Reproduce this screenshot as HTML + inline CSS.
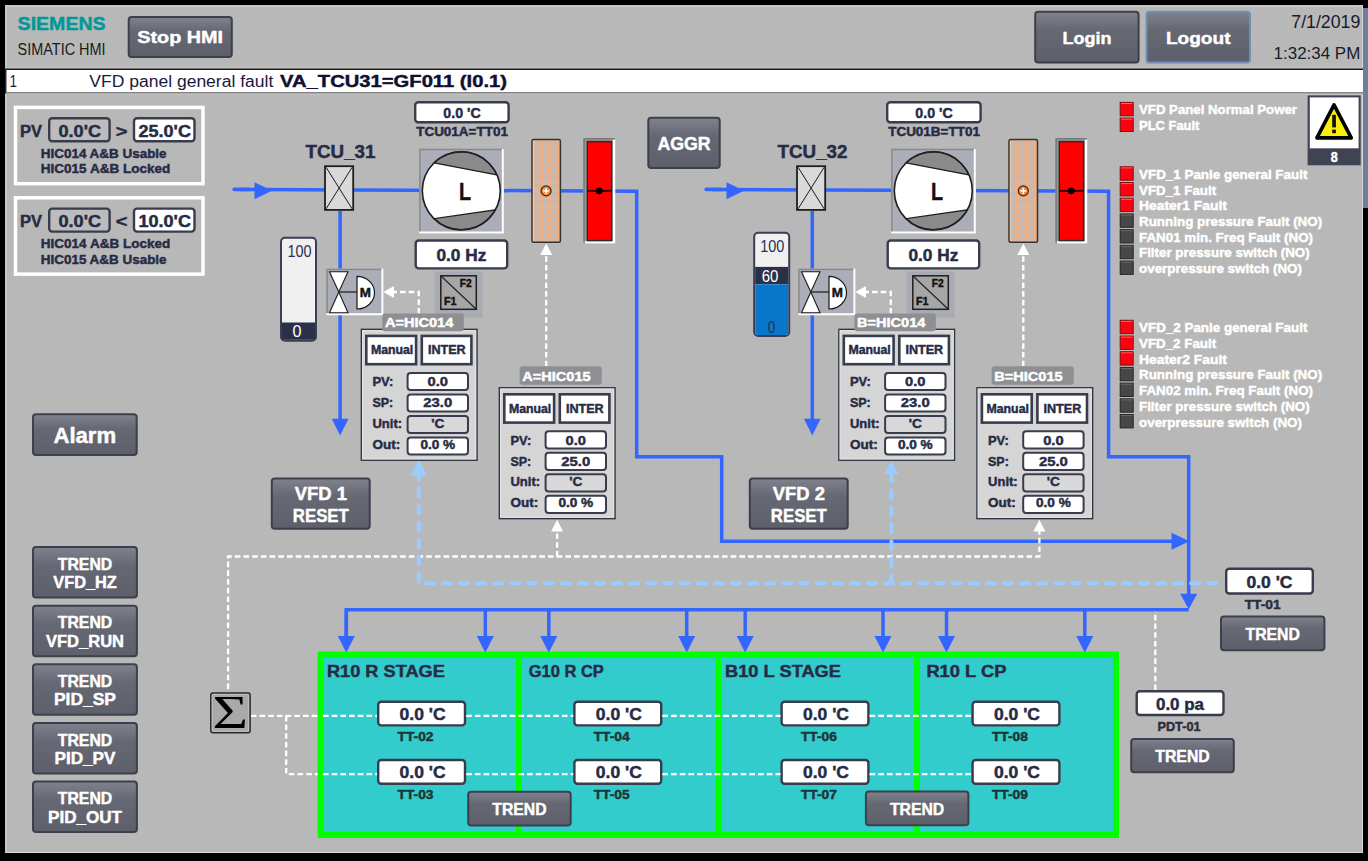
<!DOCTYPE html><html><head><meta charset="utf-8"><style>html,body{margin:0;padding:0;background:#000;overflow:hidden}svg{display:block}text{white-space:pre}</style></head><body>
<svg width="1368" height="861" viewBox="0 0 1368 861">
<defs>
<linearGradient id="btn" x1="0" y1="0" x2="0" y2="1">
<stop offset="0" stop-color="#80828d"/><stop offset="0.35" stop-color="#666874"/><stop offset="1" stop-color="#5d5f6b"/>
</linearGradient>
<pattern id="heat" x="534.8" y="142.2" width="8.55" height="8.3" patternUnits="userSpaceOnUse">
<rect width="8.55" height="8.3" fill="#dbb59c"/>
<rect x="0" y="0" width="3.7" height="4.3" fill="#b9bcc3"/>
<rect x="4.3" y="0" width="3.9" height="4.3" fill="#f8ab76"/>
</pattern>
<pattern id="heat2" x="1011.8" y="142.2" width="8.55" height="8.3" patternUnits="userSpaceOnUse">
<rect width="8.55" height="8.3" fill="#dbb59c"/>
<rect x="0" y="0" width="3.7" height="4.3" fill="#b9bcc3"/>
<rect x="4.3" y="0" width="3.9" height="4.3" fill="#f8ab76"/>
</pattern>
</defs>
<rect x="0.0" y="0.0" width="1368.0" height="861.0" rx="0" fill="#000" stroke="none" stroke-width="1"/>
<rect x="5.0" y="5.0" width="1358.0" height="848.0" rx="0" fill="#b8b8b8" stroke="none" stroke-width="1"/>
<path d="M5 852.5 H1362.5 V5" fill="none" stroke="#d8d8d8" stroke-width="1"/>
<rect x="5.5" y="5.5" width="1357.5" height="1.5" rx="0" fill="#cbcbcb" stroke="none" stroke-width="1"/>
<rect x="5.5" y="5.5" width="1.5" height="847.5" rx="0" fill="#cbcbcb" stroke="none" stroke-width="1"/>
<rect x="1363.0" y="8.0" width="5.0" height="200.0" rx="0" fill="#6d8095" stroke="none" stroke-width="1"/>
<text x="17.6" y="29.9" font-size="18.5" font-weight="bold" fill="#009999" text-anchor="start" font-family="Liberation Sans, sans-serif" textLength="88.0" lengthAdjust="spacingAndGlyphs" stroke="#009999" stroke-width="0.45" stroke-linejoin="round">SIEMENS</text>
<text x="17.6" y="55.1" font-size="16" font-weight="normal" fill="#1a1a1a" text-anchor="start" font-family="Liberation Sans, sans-serif" textLength="88.0" lengthAdjust="spacingAndGlyphs">SIMATIC HMI</text>
<rect x="128.7" y="17.0" width="103.1" height="40.0" rx="3" fill="url(#btn)" stroke="#3c3f4c" stroke-width="2"/>
<text x="180.2" y="43.3" font-size="17" font-weight="bold" fill="#ffffff" text-anchor="middle" font-family="Liberation Sans, sans-serif" textLength="85.7" lengthAdjust="spacingAndGlyphs" stroke="#ffffff" stroke-width="0.45" stroke-linejoin="round">Stop HMI</text>
<rect x="1035.2" y="11.8" width="103.4" height="50.7" rx="3" fill="url(#btn)" stroke="#3c3f4c" stroke-width="2"/>
<text x="1086.9" y="43.6" font-size="17.3" font-weight="bold" fill="#ffffff" text-anchor="middle" font-family="Liberation Sans, sans-serif" textLength="49.0" lengthAdjust="spacingAndGlyphs" stroke="#ffffff" stroke-width="0.45" stroke-linejoin="round">Login</text>
<rect x="1146.5" y="11.8" width="103.5" height="50.7" rx="3" fill="url(#btn)" stroke="#6f8fb8" stroke-width="2"/>
<text x="1198.2" y="43.6" font-size="17.3" font-weight="bold" fill="#ffffff" text-anchor="middle" font-family="Liberation Sans, sans-serif" textLength="64.6" lengthAdjust="spacingAndGlyphs" stroke="#ffffff" stroke-width="0.45" stroke-linejoin="round">Logout</text>
<text x="1360.3" y="27.6" font-size="17.5" font-weight="normal" fill="#1a1a2a" text-anchor="end" font-family="Liberation Sans, sans-serif" textLength="69.0" lengthAdjust="spacingAndGlyphs">7/1/2019</text>
<text x="1360.3" y="59.2" font-size="17" font-weight="normal" fill="#1a1a2a" text-anchor="end" font-family="Liberation Sans, sans-serif" textLength="86.7" lengthAdjust="spacingAndGlyphs">1:32:34 PM</text>
<rect x="6.0" y="67.0" width="1357.0" height="1.5" rx="0" fill="#c4c4c4" stroke="none" stroke-width="1"/>
<rect x="6.0" y="68.5" width="1357.0" height="1.5" rx="0" fill="#1e1e1e" stroke="none" stroke-width="1"/>
<rect x="6.0" y="70.0" width="1357.0" height="22.0" rx="0" fill="#ffffff" stroke="none" stroke-width="1"/>
<rect x="5.0" y="68.5" width="1.5" height="25.1" rx="0" fill="#2a2a2a" stroke="none" stroke-width="1"/>
<rect x="6.0" y="92.0" width="1357.0" height="1.6" rx="0" fill="#858585" stroke="none" stroke-width="1"/>
<rect x="6.0" y="93.6" width="1357.0" height="1.4" rx="0" fill="#c2c2c2" stroke="none" stroke-width="1"/>
<text x="9.5" y="87.2" font-size="17.3" font-weight="normal" fill="#1a1a40" text-anchor="start" font-family="Liberation Sans, sans-serif" textLength="7.5" lengthAdjust="spacingAndGlyphs">1</text>
<text x="89.3" y="87.2" font-size="17.3" font-weight="normal" fill="#1a1a40" text-anchor="start" font-family="Liberation Sans, sans-serif" textLength="184.0" lengthAdjust="spacingAndGlyphs">VFD panel general fault</text>
<text x="280.0" y="87.2" font-size="17.3" font-weight="bold" fill="#101030" text-anchor="start" font-family="Liberation Sans, sans-serif" textLength="227.0" lengthAdjust="spacingAndGlyphs" stroke="#101030" stroke-width="0.45" stroke-linejoin="round">VA_TCU31=GF011 (I0.1)</text>
<rect x="15.5" y="107.4" width="187.5" height="76.3" rx="0" fill="#b8b8b8" stroke="#ffffff" stroke-width="3.5"/>
<text x="20.0" y="136.5" font-size="16" font-weight="bold" fill="#272b45" text-anchor="start" font-family="Liberation Sans, sans-serif" textLength="22.0" lengthAdjust="spacingAndGlyphs" stroke="#272b45" stroke-width="0.45" stroke-linejoin="round">PV</text>
<rect x="49.2" y="118.2" width="60.4" height="23.0" rx="3" fill="#bcbcbc" stroke="#393c4c" stroke-width="2.4"/>
<text x="58.5" y="136.5" font-size="16" font-weight="bold" fill="#272b45" text-anchor="start" font-family="Liberation Sans, sans-serif" textLength="42.5" lengthAdjust="spacingAndGlyphs" stroke="#272b45" stroke-width="0.45" stroke-linejoin="round">0.0'C</text>
<text x="115.8" y="136.5" font-size="16" font-weight="bold" fill="#272b45" text-anchor="start" font-family="Liberation Sans, sans-serif" textLength="11.7" lengthAdjust="spacingAndGlyphs" stroke="#272b45" stroke-width="0.45" stroke-linejoin="round">&gt;</text>
<rect x="134.0" y="118.2" width="60.5" height="23.0" rx="3" fill="#fff" stroke="#393c4c" stroke-width="2.4"/>
<text x="138.6" y="136.5" font-size="16" font-weight="bold" fill="#272b45" text-anchor="start" font-family="Liberation Sans, sans-serif" textLength="52.3" lengthAdjust="spacingAndGlyphs" stroke="#272b45" stroke-width="0.45" stroke-linejoin="round">25.0'C</text>
<text x="40.8" y="157.9" font-size="12.7" font-weight="bold" fill="#272b45" text-anchor="start" font-family="Liberation Sans, sans-serif" textLength="125.8" lengthAdjust="spacingAndGlyphs" stroke="#272b45" stroke-width="0.45" stroke-linejoin="round">HIC014 A&amp;B Usable</text>
<text x="40.8" y="173.3" font-size="12.7" font-weight="bold" fill="#272b45" text-anchor="start" font-family="Liberation Sans, sans-serif" textLength="129.5" lengthAdjust="spacingAndGlyphs" stroke="#272b45" stroke-width="0.45" stroke-linejoin="round">HIC015 A&amp;B Locked</text>
<rect x="15.5" y="197.8" width="187.5" height="76.3" rx="0" fill="#b8b8b8" stroke="#ffffff" stroke-width="3.5"/>
<text x="20.0" y="226.9" font-size="16" font-weight="bold" fill="#272b45" text-anchor="start" font-family="Liberation Sans, sans-serif" textLength="22.0" lengthAdjust="spacingAndGlyphs" stroke="#272b45" stroke-width="0.45" stroke-linejoin="round">PV</text>
<rect x="49.2" y="208.6" width="60.4" height="23.0" rx="3" fill="#bcbcbc" stroke="#393c4c" stroke-width="2.4"/>
<text x="58.5" y="226.9" font-size="16" font-weight="bold" fill="#272b45" text-anchor="start" font-family="Liberation Sans, sans-serif" textLength="42.5" lengthAdjust="spacingAndGlyphs" stroke="#272b45" stroke-width="0.45" stroke-linejoin="round">0.0'C</text>
<text x="115.8" y="226.9" font-size="16" font-weight="bold" fill="#272b45" text-anchor="start" font-family="Liberation Sans, sans-serif" textLength="11.7" lengthAdjust="spacingAndGlyphs" stroke="#272b45" stroke-width="0.45" stroke-linejoin="round">&lt;</text>
<rect x="134.0" y="208.6" width="60.5" height="23.0" rx="3" fill="#fff" stroke="#393c4c" stroke-width="2.4"/>
<text x="138.6" y="226.9" font-size="16" font-weight="bold" fill="#272b45" text-anchor="start" font-family="Liberation Sans, sans-serif" textLength="52.3" lengthAdjust="spacingAndGlyphs" stroke="#272b45" stroke-width="0.45" stroke-linejoin="round">10.0'C</text>
<text x="40.8" y="248.3" font-size="12.7" font-weight="bold" fill="#272b45" text-anchor="start" font-family="Liberation Sans, sans-serif" textLength="129.5" lengthAdjust="spacingAndGlyphs" stroke="#272b45" stroke-width="0.45" stroke-linejoin="round">HIC014 A&amp;B Locked</text>
<text x="40.8" y="263.7" font-size="12.7" font-weight="bold" fill="#272b45" text-anchor="start" font-family="Liberation Sans, sans-serif" textLength="125.8" lengthAdjust="spacingAndGlyphs" stroke="#272b45" stroke-width="0.45" stroke-linejoin="round">HIC015 A&amp;B Usable</text>
<path d="M240.0 189.4 L636.7 191.2 L636.7 456.7 L721.7 456.7 L721.7 541.2 L1173.0 541.2" fill="none" stroke="#3366ff" stroke-width="3.5" stroke-linecap="butt" stroke-linejoin="miter"/>
<path d="M234.2 189.4 L250.0 189.5" fill="none" stroke="#3366ff" stroke-width="3.6" stroke-linecap="round" stroke-linejoin="miter"/>
<path d="M254.5 182.2 L254.5 199.2 L272.0 190.7 Z" fill="#3366ff" stroke="none" stroke-width="1"/>
<path d="M340.1 211.0 L340.1 420.0" fill="none" stroke="#3366ff" stroke-width="3.5" stroke-linecap="butt" stroke-linejoin="miter"/>
<path d="M331.8 418.7 L348.5 418.7 L340.1 435.4 Z" fill="#3366ff" stroke="none" stroke-width="1"/>
<path d="M1171.5 532.7 L1171.5 549.7 L1189.5 541.2 Z" fill="#3366ff" stroke="none" stroke-width="1"/>
<path d="M712.0 189.4 L1108.6 191.2 L1108.6 456.8 L1188.7 456.8 L1188.7 595.0" fill="none" stroke="#3366ff" stroke-width="3.5" stroke-linecap="butt" stroke-linejoin="miter"/>
<path d="M706.2 189.4 L722.0 189.5" fill="none" stroke="#3366ff" stroke-width="3.6" stroke-linecap="round" stroke-linejoin="miter"/>
<path d="M726.5 182.3 L726.5 199.3 L744.0 190.8 Z" fill="#3366ff" stroke="none" stroke-width="1"/>
<path d="M812.3 211.0 L812.3 420.0" fill="none" stroke="#3366ff" stroke-width="3.5" stroke-linecap="butt" stroke-linejoin="miter"/>
<path d="M803.9 418.7 L820.6 418.7 L812.3 435.4 Z" fill="#3366ff" stroke="none" stroke-width="1"/>
<path d="M1180.2 593.7 L1197.2 593.7 L1188.7 609.2 Z" fill="#3366ff" stroke="none" stroke-width="1"/>
<path d="M346.3 636.5 L346.3 609.7 L1188.7 609.7" fill="none" stroke="#3366ff" stroke-width="3.5" stroke-linecap="butt" stroke-linejoin="miter"/>
<path d="M346.3 609.7 L346.3 637.0" fill="none" stroke="#3366ff" stroke-width="3.5" stroke-linecap="butt" stroke-linejoin="miter"/>
<path d="M337.8 636.0 L354.8 636.0 L346.3 652.8 Z" fill="#3366ff" stroke="none" stroke-width="1"/>
<path d="M485.3 609.7 L485.3 637.0" fill="none" stroke="#3366ff" stroke-width="3.5" stroke-linecap="butt" stroke-linejoin="miter"/>
<path d="M476.8 636.0 L493.8 636.0 L485.3 652.8 Z" fill="#3366ff" stroke="none" stroke-width="1"/>
<path d="M548.8 609.7 L548.8 637.0" fill="none" stroke="#3366ff" stroke-width="3.5" stroke-linecap="butt" stroke-linejoin="miter"/>
<path d="M540.3 636.0 L557.3 636.0 L548.8 652.8 Z" fill="#3366ff" stroke="none" stroke-width="1"/>
<path d="M686.7 609.7 L686.7 637.0" fill="none" stroke="#3366ff" stroke-width="3.5" stroke-linecap="butt" stroke-linejoin="miter"/>
<path d="M678.2 636.0 L695.2 636.0 L686.7 652.8 Z" fill="#3366ff" stroke="none" stroke-width="1"/>
<path d="M745.2 609.7 L745.2 637.0" fill="none" stroke="#3366ff" stroke-width="3.5" stroke-linecap="butt" stroke-linejoin="miter"/>
<path d="M736.7 636.0 L753.7 636.0 L745.2 652.8 Z" fill="#3366ff" stroke="none" stroke-width="1"/>
<path d="M883.0 609.7 L883.0 637.0" fill="none" stroke="#3366ff" stroke-width="3.5" stroke-linecap="butt" stroke-linejoin="miter"/>
<path d="M874.5 636.0 L891.5 636.0 L883.0 652.8 Z" fill="#3366ff" stroke="none" stroke-width="1"/>
<path d="M946.5 609.7 L946.5 637.0" fill="none" stroke="#3366ff" stroke-width="3.5" stroke-linecap="butt" stroke-linejoin="miter"/>
<path d="M938.0 636.0 L955.0 636.0 L946.5 652.8 Z" fill="#3366ff" stroke="none" stroke-width="1"/>
<path d="M1084.8 609.7 L1084.8 637.0" fill="none" stroke="#3366ff" stroke-width="3.5" stroke-linecap="butt" stroke-linejoin="miter"/>
<path d="M1076.3 636.0 L1093.3 636.0 L1084.8 652.8 Z" fill="#3366ff" stroke="none" stroke-width="1"/>
<path d="M228.1 689.0 L228.1 556.5 L1039.4 556.5 L1039.4 531.0" fill="none" stroke="#ffffff" stroke-width="2.3" stroke-linecap="butt" stroke-linejoin="miter" stroke-dasharray="5.6 3.1"/>
<path d="M557.1 556.5 L557.1 531.0" fill="none" stroke="#ffffff" stroke-width="2.3" stroke-linecap="butt" stroke-linejoin="miter" stroke-dasharray="5.6 3.1"/>
<path d="M557.1 519.7 L563.1 531.5 L551.1 531.5 Z" fill="#fff" stroke="none" stroke-width="1"/>
<path d="M1039.4 519.7 L1045.4 531.5 L1033.4 531.5 Z" fill="#fff" stroke="none" stroke-width="1"/>
<path d="M1224.0 583.2 L418.8 583.2 L418.8 475.0" fill="none" stroke="#99ccff" stroke-width="4" stroke-linecap="round" stroke-linejoin="miter" stroke-dasharray="8 9" stroke-dashoffset="9"/>
<path d="M891.4 583.2 L891.4 473.5" fill="none" stroke="#99ccff" stroke-width="4" stroke-linecap="round" stroke-linejoin="miter" stroke-dasharray="8 9"/>
<path d="M418.8 459.6 L427.3 475.5 L410.3 475.5 Z" fill="#99ccff" stroke="none" stroke-width="1"/>
<path d="M891.4 461.0 L898.6 474.0 L884.1 474.0 Z" fill="#99ccff" stroke="none" stroke-width="1"/>
<path d="M546.2 366.3 L546.2 254.0" fill="none" stroke="#ffffff" stroke-width="2.3" stroke-linecap="butt" stroke-linejoin="miter" stroke-dasharray="5.6 3.1"/>
<path d="M546.2 243.5 L552.2 255.0 L540.2 255.0 Z" fill="#fff" stroke="none" stroke-width="1"/>
<path d="M1023.3 366.3 L1023.3 254.0" fill="none" stroke="#ffffff" stroke-width="2.3" stroke-linecap="butt" stroke-linejoin="miter" stroke-dasharray="5.6 3.1"/>
<path d="M1023.3 243.5 L1029.3 255.0 L1017.3 255.0 Z" fill="#fff" stroke="none" stroke-width="1"/>
<path d="M418.8 313.6 L418.8 292.0 L393.0 292.0" fill="none" stroke="#ffffff" stroke-width="2.3" stroke-linecap="butt" stroke-linejoin="miter" stroke-dasharray="5.6 3.1"/>
<path d="M383.4 292.0 L394.0 286.0 L394.0 298.0 Z" fill="#fff" stroke="none" stroke-width="1"/>
<path d="M890.8 313.6 L890.8 292.0 L865.0 292.0" fill="none" stroke="#ffffff" stroke-width="2.3" stroke-linecap="butt" stroke-linejoin="miter" stroke-dasharray="5.6 3.1"/>
<path d="M855.4 292.0 L866.0 286.0 L866.0 298.0 Z" fill="#fff" stroke="none" stroke-width="1"/>
<path d="M1155.3 690.0 L1155.3 611.5" fill="none" stroke="#ffffff" stroke-width="2.3" stroke-linecap="butt" stroke-linejoin="miter" stroke-dasharray="5.6 3.1"/>
<path d="M250.8 715.8 L971.0 715.8" fill="none" stroke="#ffffff" stroke-width="2.3" stroke-linecap="butt" stroke-linejoin="miter" stroke-dasharray="5.6 3.1"/>
<path d="M286.2 715.8 L286.2 774.1 L971.0 774.1" fill="none" stroke="#ffffff" stroke-width="2.3" stroke-linecap="butt" stroke-linejoin="miter" stroke-dasharray="5.6 3.1"/>
<text x="305.6" y="158.1" font-size="18.2" font-weight="bold" fill="#272b45" text-anchor="start" font-family="Liberation Sans, sans-serif" textLength="69.9" lengthAdjust="spacingAndGlyphs" stroke="#272b45" stroke-width="0.45" stroke-linejoin="round">TCU_31</text>
<rect x="325.0" y="166.2" width="28.2" height="43.7" rx="0" fill="#d9d9d9" stroke="#1e1e1e" stroke-width="1.8"/>
<path d="M326.1 167.3 L352.1 208.8" fill="none" stroke="#1a1a1a" stroke-width="1" stroke-linecap="butt" stroke-linejoin="miter"/>
<path d="M352.1 167.3 L326.1 208.8" fill="none" stroke="#1a1a1a" stroke-width="1" stroke-linecap="butt" stroke-linejoin="miter"/>
<rect x="415.2" y="102.2" width="93.4" height="20.1" rx="3" fill="#fff" stroke="#393c4c" stroke-width="2.4"/>
<text x="462.0" y="117.8" font-size="14.5" font-weight="bold" fill="#272b45" text-anchor="middle" font-family="Liberation Sans, sans-serif" textLength="37.3" lengthAdjust="spacingAndGlyphs" stroke="#272b45" stroke-width="0.45" stroke-linejoin="round">0.0 'C</text>
<text x="416.2" y="136.4" font-size="12.3" font-weight="bold" fill="#272b45" text-anchor="start" font-family="Liberation Sans, sans-serif" textLength="91.7" lengthAdjust="spacingAndGlyphs" stroke="#272b45" stroke-width="0.45" stroke-linejoin="round">TCU01A=TT01</text>
<rect x="419.1" y="148.7" width="84.7" height="84.8" rx="0" fill="#abadb8" stroke="none" stroke-width="1"/>
<path d="M419.9 233.5 L419.9 149.4 L503.8 149.4" fill="none" stroke="#8a8a8a" stroke-width="1.5" stroke-linecap="butt" stroke-linejoin="miter"/>
<path d="M419.1 232.5 L502.8 232.5 L502.8 148.7" fill="none" stroke="#ffffff" stroke-width="2" stroke-linecap="butt" stroke-linejoin="miter"/>
<circle cx="461.3" cy="190.8" r="39" fill="#ffffff"/>
<path d="M434.0 162.9 A39 39 0 0 1 496.9 174.9 Z" fill="#8a8a8a" stroke="#1f1f1f" stroke-width="1.3"/>
<path d="M495.4 209.8 A39 39 0 0 1 434.1 218.7 Z" fill="#8a8a8a" stroke="#1f1f1f" stroke-width="1.3"/>
<circle cx="461.3" cy="190.8" r="39" fill="none" stroke="#1f1f1f" stroke-width="1.6"/>
<text x="464.9" y="199.5" font-size="23.5" font-weight="bold" fill="#111" text-anchor="middle" font-family="Liberation Sans, sans-serif" textLength="12.0" lengthAdjust="spacingAndGlyphs" stroke="#111" stroke-width="0.45" stroke-linejoin="round">L</text>
<rect x="415.7" y="240.5" width="91.5" height="27.9" rx="3" fill="#fff" stroke="#393c4c" stroke-width="2.4"/>
<text x="461.4" y="260.6" font-size="16.2" font-weight="bold" fill="#272b45" text-anchor="middle" font-family="Liberation Sans, sans-serif" textLength="49.8" lengthAdjust="spacingAndGlyphs" stroke="#272b45" stroke-width="0.45" stroke-linejoin="round">0.0 Hz</text>
<rect x="434.8" y="271.5" width="47.5" height="46.1" rx="0" fill="#a8aab4" stroke="none" stroke-width="1"/>
<rect x="440.8" y="275.8" width="35.5" height="33.5" rx="0" fill="#a6a6a6" stroke="#202020" stroke-width="1.5"/>
<path d="M441.0 276.0 L476.0 309.0" fill="none" stroke="#202020" stroke-width="1.1" stroke-linecap="butt" stroke-linejoin="miter"/>
<text x="459.8" y="287.1" font-size="11" font-weight="bold" fill="#111" text-anchor="start" font-family="Liberation Sans, sans-serif" textLength="12.0" lengthAdjust="spacingAndGlyphs" stroke="#111" stroke-width="0.45" stroke-linejoin="round">F2</text>
<text x="444.0" y="304.8" font-size="11" font-weight="bold" fill="#111" text-anchor="start" font-family="Liberation Sans, sans-serif" textLength="12.5" lengthAdjust="spacingAndGlyphs" stroke="#111" stroke-width="0.45" stroke-linejoin="round">F1</text>
<rect x="326.3" y="268.6" width="57.1" height="46.6" rx="0" fill="#abadb8" stroke="none" stroke-width="1"/>
<path d="M327.1 315.2 L327.1 269.4 L383.4 269.4" fill="none" stroke="#8a8a8a" stroke-width="1.5" stroke-linecap="butt" stroke-linejoin="miter"/>
<path d="M326.3 314.2 L382.4 314.2 L382.4 268.6" fill="none" stroke="#ffffff" stroke-width="2" stroke-linecap="butt" stroke-linejoin="miter"/>
<path d="M329.5 271.8 L348.0 271.8 L338.8 292.0 Z M338.8 292.0 L329.5 312.8 L348.0 312.8 Z" fill="#fff" stroke="#1a1a1a" stroke-width="1.1"/>
<path d="M338.8 292.0 L357.0 292.0" fill="none" stroke="#1a1a1a" stroke-width="1.2" stroke-linecap="butt" stroke-linejoin="miter"/>
<path d="M357.0 276.3 A17.5 16.35 0 0 1 357.0 309.0 Z" fill="#fff" stroke="#1a1a1a" stroke-width="1.2"/>
<text x="365.3" y="297.0" font-size="13" font-weight="bold" fill="#111" text-anchor="middle" font-family="Liberation Sans, sans-serif" textLength="11.2" lengthAdjust="spacingAndGlyphs" stroke="#111" stroke-width="0.45" stroke-linejoin="round">M</text>
<rect x="281.0" y="237.8" width="35.0" height="103.0" rx="4" fill="#f0f0f0" stroke="#3a3e55" stroke-width="2"/>
<rect x="282.0" y="322.5" width="33.0" height="17.3" rx="0" fill="#2b2f48" stroke="none" stroke-width="1"/>
<path d="M282 322.5 H315" stroke="#2b2f48" stroke-width="0"/>
<text x="287.4" y="257.3" font-size="17" font-weight="normal" fill="#2b3050" text-anchor="start" font-family="Liberation Sans, sans-serif" textLength="24.1" lengthAdjust="spacingAndGlyphs">100</text>
<text x="292.5" y="337.0" font-size="17" font-weight="normal" fill="#ffffff" text-anchor="start" font-family="Liberation Sans, sans-serif" textLength="9.0" lengthAdjust="spacingAndGlyphs">0</text>
<rect x="532.0" y="139.6" width="28.4" height="102.6" rx="1.5" fill="url(#heat)" stroke="#333333" stroke-width="1.5"/>
<path d="M533.5 140.8 L533.5 240.9" fill="none" stroke="#efc9ab" stroke-width="1.2" stroke-linecap="butt" stroke-linejoin="miter"/>
<circle cx="546.1" cy="190.9" r="5" fill="#f2883a" stroke="#3a2518" stroke-width="1.2"/>
<path d="M543.1 190.9 L549.1 190.9" fill="none" stroke="#fff" stroke-width="1.5" stroke-linecap="butt" stroke-linejoin="miter"/>
<path d="M546.1 187.9 L546.1 193.9" fill="none" stroke="#fff" stroke-width="1.5" stroke-linecap="butt" stroke-linejoin="miter"/>
<rect x="583.4" y="138.1" width="31.8" height="105.5" rx="0" fill="#9a9a9a" stroke="none" stroke-width="1"/>
<path d="M583.4 242.3 L614.0 242.3 L614.0 138.1" fill="none" stroke="#ffffff" stroke-width="2.5" stroke-linecap="butt" stroke-linejoin="miter"/>
<path d="M584.1 243.6 L584.1 138.8 L615.2 138.8" fill="none" stroke="#7a7a7a" stroke-width="1.5" stroke-linecap="butt" stroke-linejoin="miter"/>
<rect x="587.3" y="141.6" width="24.3" height="99.0" rx="0" fill="#ff0000" stroke="#2a2a2a" stroke-width="1.5"/>
<path d="M587.4 190.9 L611.2 190.9" fill="none" stroke="#3a0000" stroke-width="2" stroke-linecap="butt" stroke-linejoin="miter"/>
<circle cx="599.2" cy="190.9" r="3.3" fill="#000"/>
<rect x="361.4" y="329.4" width="115.6" height="130.8" rx="0" fill="#d5d5d5" stroke="#2f3445" stroke-width="1.5"/>
<rect x="362.6" y="330.6" width="113.1" height="128.3" rx="0" fill="none" stroke="#e6e6e6" stroke-width="1"/>
<rect x="366.3" y="335.9" width="49.8" height="28.3" rx="0" fill="#ffffff" stroke="#393c4c" stroke-width="2.6"/>
<rect x="421.8" y="335.9" width="49.6" height="28.3" rx="0" fill="#ffffff" stroke="#393c4c" stroke-width="2.6"/>
<text x="370.9" y="354.2" font-size="12.2" font-weight="bold" fill="#272b45" text-anchor="start" font-family="Liberation Sans, sans-serif" textLength="42.4" lengthAdjust="spacingAndGlyphs" stroke="#272b45" stroke-width="0.45" stroke-linejoin="round">Manual</text>
<text x="427.9" y="354.2" font-size="12.5" font-weight="bold" fill="#272b45" text-anchor="start" font-family="Liberation Sans, sans-serif" textLength="37.8" lengthAdjust="spacingAndGlyphs" stroke="#272b45" stroke-width="0.45" stroke-linejoin="round">INTER</text>
<text x="372.4" y="386.2" font-size="13" font-weight="bold" fill="#272b45" text-anchor="start" font-family="Liberation Sans, sans-serif" textLength="20.8" lengthAdjust="spacingAndGlyphs" stroke="#272b45" stroke-width="0.45" stroke-linejoin="round">PV:</text>
<rect x="407.6" y="372.9" width="60.4" height="17.2" rx="3" fill="#ffffff" stroke="#393c4c" stroke-width="2"/>
<text x="437.8" y="386.2" font-size="13" font-weight="bold" fill="#272b45" text-anchor="middle" font-family="Liberation Sans, sans-serif" textLength="20.4" lengthAdjust="spacingAndGlyphs" stroke="#272b45" stroke-width="0.45" stroke-linejoin="round">0.0</text>
<text x="372.4" y="407.1" font-size="13" font-weight="bold" fill="#272b45" text-anchor="start" font-family="Liberation Sans, sans-serif" textLength="20.8" lengthAdjust="spacingAndGlyphs" stroke="#272b45" stroke-width="0.45" stroke-linejoin="round">SP:</text>
<rect x="407.6" y="394.4" width="60.4" height="17.2" rx="3" fill="#ffffff" stroke="#393c4c" stroke-width="2"/>
<text x="437.8" y="407.1" font-size="13" font-weight="bold" fill="#272b45" text-anchor="middle" font-family="Liberation Sans, sans-serif" textLength="28.9" lengthAdjust="spacingAndGlyphs" stroke="#272b45" stroke-width="0.45" stroke-linejoin="round">23.0</text>
<text x="372.4" y="428.0" font-size="13" font-weight="bold" fill="#272b45" text-anchor="start" font-family="Liberation Sans, sans-serif" textLength="29.7" lengthAdjust="spacingAndGlyphs" stroke="#272b45" stroke-width="0.45" stroke-linejoin="round">Unit:</text>
<rect x="407.6" y="415.9" width="60.4" height="17.2" rx="3" fill="#d8d8d8" stroke="#393c4c" stroke-width="2"/>
<text x="437.8" y="428.0" font-size="13" font-weight="bold" fill="#272b45" text-anchor="middle" font-family="Liberation Sans, sans-serif" textLength="13.1" lengthAdjust="spacingAndGlyphs" stroke="#272b45" stroke-width="0.45" stroke-linejoin="round">'C</text>
<text x="372.4" y="448.9" font-size="13" font-weight="bold" fill="#272b45" text-anchor="start" font-family="Liberation Sans, sans-serif" textLength="27.8" lengthAdjust="spacingAndGlyphs" stroke="#272b45" stroke-width="0.45" stroke-linejoin="round">Out:</text>
<rect x="407.6" y="437.4" width="60.4" height="17.2" rx="3" fill="#ffffff" stroke="#393c4c" stroke-width="2"/>
<text x="437.8" y="448.9" font-size="12" font-weight="bold" fill="#272b45" text-anchor="middle" font-family="Liberation Sans, sans-serif" textLength="34.8" lengthAdjust="spacingAndGlyphs" stroke="#272b45" stroke-width="0.45" stroke-linejoin="round">0.0 %</text>
<rect x="382.3" y="313.6" width="81.5" height="17.7" rx="3" fill="#8e8f92" stroke="none" stroke-width="1"/>
<text x="385.0" y="327.3" font-size="12.5" font-weight="bold" fill="#ffffff" text-anchor="start" font-family="Liberation Sans, sans-serif" textLength="68.3" lengthAdjust="spacingAndGlyphs" stroke="#ffffff" stroke-width="0.45" stroke-linejoin="round">A=HIC014</text>
<rect x="499.4" y="387.8" width="115.6" height="130.8" rx="0" fill="#d5d5d5" stroke="#2f3445" stroke-width="1.5"/>
<rect x="500.6" y="389.0" width="113.1" height="128.3" rx="0" fill="none" stroke="#e6e6e6" stroke-width="1"/>
<rect x="504.3" y="394.3" width="49.8" height="28.3" rx="0" fill="#ffffff" stroke="#393c4c" stroke-width="2.6"/>
<rect x="559.8" y="394.3" width="49.6" height="28.3" rx="0" fill="#ffffff" stroke="#393c4c" stroke-width="2.6"/>
<text x="508.9" y="412.6" font-size="12.2" font-weight="bold" fill="#272b45" text-anchor="start" font-family="Liberation Sans, sans-serif" textLength="42.4" lengthAdjust="spacingAndGlyphs" stroke="#272b45" stroke-width="0.45" stroke-linejoin="round">Manual</text>
<text x="565.9" y="412.6" font-size="12.5" font-weight="bold" fill="#272b45" text-anchor="start" font-family="Liberation Sans, sans-serif" textLength="37.8" lengthAdjust="spacingAndGlyphs" stroke="#272b45" stroke-width="0.45" stroke-linejoin="round">INTER</text>
<text x="510.4" y="444.6" font-size="13" font-weight="bold" fill="#272b45" text-anchor="start" font-family="Liberation Sans, sans-serif" textLength="20.8" lengthAdjust="spacingAndGlyphs" stroke="#272b45" stroke-width="0.45" stroke-linejoin="round">PV:</text>
<rect x="545.6" y="431.3" width="60.4" height="17.2" rx="3" fill="#ffffff" stroke="#393c4c" stroke-width="2"/>
<text x="575.8" y="444.6" font-size="13" font-weight="bold" fill="#272b45" text-anchor="middle" font-family="Liberation Sans, sans-serif" textLength="20.4" lengthAdjust="spacingAndGlyphs" stroke="#272b45" stroke-width="0.45" stroke-linejoin="round">0.0</text>
<text x="510.4" y="465.5" font-size="13" font-weight="bold" fill="#272b45" text-anchor="start" font-family="Liberation Sans, sans-serif" textLength="20.8" lengthAdjust="spacingAndGlyphs" stroke="#272b45" stroke-width="0.45" stroke-linejoin="round">SP:</text>
<rect x="545.6" y="452.8" width="60.4" height="17.2" rx="3" fill="#ffffff" stroke="#393c4c" stroke-width="2"/>
<text x="575.8" y="465.5" font-size="13" font-weight="bold" fill="#272b45" text-anchor="middle" font-family="Liberation Sans, sans-serif" textLength="28.9" lengthAdjust="spacingAndGlyphs" stroke="#272b45" stroke-width="0.45" stroke-linejoin="round">25.0</text>
<text x="510.4" y="486.4" font-size="13" font-weight="bold" fill="#272b45" text-anchor="start" font-family="Liberation Sans, sans-serif" textLength="29.7" lengthAdjust="spacingAndGlyphs" stroke="#272b45" stroke-width="0.45" stroke-linejoin="round">Unit:</text>
<rect x="545.6" y="474.3" width="60.4" height="17.2" rx="3" fill="#d8d8d8" stroke="#393c4c" stroke-width="2"/>
<text x="575.8" y="486.4" font-size="13" font-weight="bold" fill="#272b45" text-anchor="middle" font-family="Liberation Sans, sans-serif" textLength="13.1" lengthAdjust="spacingAndGlyphs" stroke="#272b45" stroke-width="0.45" stroke-linejoin="round">'C</text>
<text x="510.4" y="507.3" font-size="13" font-weight="bold" fill="#272b45" text-anchor="start" font-family="Liberation Sans, sans-serif" textLength="27.8" lengthAdjust="spacingAndGlyphs" stroke="#272b45" stroke-width="0.45" stroke-linejoin="round">Out:</text>
<rect x="545.6" y="495.8" width="60.4" height="17.2" rx="3" fill="#ffffff" stroke="#393c4c" stroke-width="2"/>
<text x="575.8" y="507.3" font-size="12" font-weight="bold" fill="#272b45" text-anchor="middle" font-family="Liberation Sans, sans-serif" textLength="34.8" lengthAdjust="spacingAndGlyphs" stroke="#272b45" stroke-width="0.45" stroke-linejoin="round">0.0 %</text>
<rect x="519.6" y="366.3" width="82.2" height="18.5" rx="3" fill="#8e8f92" stroke="none" stroke-width="1"/>
<text x="522.3" y="380.8" font-size="12.5" font-weight="bold" fill="#ffffff" text-anchor="start" font-family="Liberation Sans, sans-serif" textLength="68.3" lengthAdjust="spacingAndGlyphs" stroke="#ffffff" stroke-width="0.45" stroke-linejoin="round">A=HIC015</text>
<text x="777.6" y="158.1" font-size="18.2" font-weight="bold" fill="#272b45" text-anchor="start" font-family="Liberation Sans, sans-serif" textLength="69.9" lengthAdjust="spacingAndGlyphs" stroke="#272b45" stroke-width="0.45" stroke-linejoin="round">TCU_32</text>
<rect x="797.0" y="166.2" width="28.2" height="43.7" rx="0" fill="#d9d9d9" stroke="#1e1e1e" stroke-width="1.8"/>
<path d="M798.1 167.3 L824.1 208.8" fill="none" stroke="#1a1a1a" stroke-width="1" stroke-linecap="butt" stroke-linejoin="miter"/>
<path d="M824.1 167.3 L798.1 208.8" fill="none" stroke="#1a1a1a" stroke-width="1" stroke-linecap="butt" stroke-linejoin="miter"/>
<rect x="887.2" y="102.2" width="93.4" height="20.1" rx="3" fill="#fff" stroke="#393c4c" stroke-width="2.4"/>
<text x="934.0" y="117.8" font-size="14.5" font-weight="bold" fill="#272b45" text-anchor="middle" font-family="Liberation Sans, sans-serif" textLength="37.3" lengthAdjust="spacingAndGlyphs" stroke="#272b45" stroke-width="0.45" stroke-linejoin="round">0.0 'C</text>
<text x="888.2" y="136.4" font-size="12.3" font-weight="bold" fill="#272b45" text-anchor="start" font-family="Liberation Sans, sans-serif" textLength="91.7" lengthAdjust="spacingAndGlyphs" stroke="#272b45" stroke-width="0.45" stroke-linejoin="round">TCU01B=TT01</text>
<rect x="891.1" y="148.7" width="84.7" height="84.8" rx="0" fill="#abadb8" stroke="none" stroke-width="1"/>
<path d="M891.9 233.5 L891.9 149.4 L975.8 149.4" fill="none" stroke="#8a8a8a" stroke-width="1.5" stroke-linecap="butt" stroke-linejoin="miter"/>
<path d="M891.1 232.5 L974.8 232.5 L974.8 148.7" fill="none" stroke="#ffffff" stroke-width="2" stroke-linecap="butt" stroke-linejoin="miter"/>
<circle cx="933.3" cy="190.8" r="39" fill="#ffffff"/>
<path d="M906.0 162.9 A39 39 0 0 1 968.9 174.9 Z" fill="#8a8a8a" stroke="#1f1f1f" stroke-width="1.3"/>
<path d="M967.4 209.8 A39 39 0 0 1 906.1 218.7 Z" fill="#8a8a8a" stroke="#1f1f1f" stroke-width="1.3"/>
<circle cx="933.3" cy="190.8" r="39" fill="none" stroke="#1f1f1f" stroke-width="1.6"/>
<text x="936.9" y="199.5" font-size="23.5" font-weight="bold" fill="#111" text-anchor="middle" font-family="Liberation Sans, sans-serif" textLength="12.0" lengthAdjust="spacingAndGlyphs" stroke="#111" stroke-width="0.45" stroke-linejoin="round">L</text>
<rect x="887.7" y="240.5" width="91.5" height="27.9" rx="3" fill="#fff" stroke="#393c4c" stroke-width="2.4"/>
<text x="933.4" y="260.6" font-size="16.2" font-weight="bold" fill="#272b45" text-anchor="middle" font-family="Liberation Sans, sans-serif" textLength="49.8" lengthAdjust="spacingAndGlyphs" stroke="#272b45" stroke-width="0.45" stroke-linejoin="round">0.0 Hz</text>
<rect x="906.8" y="271.5" width="47.5" height="46.1" rx="0" fill="#a8aab4" stroke="none" stroke-width="1"/>
<rect x="912.8" y="275.8" width="35.5" height="33.5" rx="0" fill="#a6a6a6" stroke="#202020" stroke-width="1.5"/>
<path d="M913.0 276.0 L948.0 309.0" fill="none" stroke="#202020" stroke-width="1.1" stroke-linecap="butt" stroke-linejoin="miter"/>
<text x="931.8" y="287.1" font-size="11" font-weight="bold" fill="#111" text-anchor="start" font-family="Liberation Sans, sans-serif" textLength="12.0" lengthAdjust="spacingAndGlyphs" stroke="#111" stroke-width="0.45" stroke-linejoin="round">F2</text>
<text x="916.0" y="304.8" font-size="11" font-weight="bold" fill="#111" text-anchor="start" font-family="Liberation Sans, sans-serif" textLength="12.5" lengthAdjust="spacingAndGlyphs" stroke="#111" stroke-width="0.45" stroke-linejoin="round">F1</text>
<rect x="798.3" y="268.6" width="57.1" height="46.6" rx="0" fill="#abadb8" stroke="none" stroke-width="1"/>
<path d="M799.0 315.2 L799.0 269.4 L855.4 269.4" fill="none" stroke="#8a8a8a" stroke-width="1.5" stroke-linecap="butt" stroke-linejoin="miter"/>
<path d="M798.3 314.2 L854.4 314.2 L854.4 268.6" fill="none" stroke="#ffffff" stroke-width="2" stroke-linecap="butt" stroke-linejoin="miter"/>
<path d="M801.5 271.8 L820.0 271.8 L810.8 292.0 Z M810.8 292.0 L801.5 312.8 L820.0 312.8 Z" fill="#fff" stroke="#1a1a1a" stroke-width="1.1"/>
<path d="M810.8 292.0 L829.0 292.0" fill="none" stroke="#1a1a1a" stroke-width="1.2" stroke-linecap="butt" stroke-linejoin="miter"/>
<path d="M829.0 276.3 A17.5 16.35 0 0 1 829.0 309.0 Z" fill="#fff" stroke="#1a1a1a" stroke-width="1.2"/>
<text x="837.3" y="297.0" font-size="13" font-weight="bold" fill="#111" text-anchor="middle" font-family="Liberation Sans, sans-serif" textLength="11.2" lengthAdjust="spacingAndGlyphs" stroke="#111" stroke-width="0.45" stroke-linejoin="round">M</text>
<rect x="754.2" y="232.7" width="35.0" height="103.3" rx="4" fill="#f0f0f0" stroke="#3a3e55" stroke-width="2"/>
<rect x="755.2" y="266.9" width="33.0" height="17.3" rx="0" fill="#2b2f48" stroke="none" stroke-width="1"/>
<path d="M755.2 284.2 H788.2 V332 Q788.2 335 785.2 335 H758.2 Q755.2 335 755.2 332 Z" fill="#0877c9" stroke="none" stroke-width="1"/>
<text x="760.2" y="252.2" font-size="17" font-weight="normal" fill="#2b3050" text-anchor="start" font-family="Liberation Sans, sans-serif" textLength="24.1" lengthAdjust="spacingAndGlyphs">100</text>
<text x="761.7" y="282.0" font-size="17" font-weight="normal" fill="#ffffff" text-anchor="start" font-family="Liberation Sans, sans-serif" textLength="16.7" lengthAdjust="spacingAndGlyphs">60</text>
<text x="767.7" y="332.5" font-size="17" font-weight="normal" fill="#2b3050" text-anchor="start" font-family="Liberation Sans, sans-serif" textLength="7.6" lengthAdjust="spacingAndGlyphs">0</text>
<rect x="1009.0" y="139.6" width="28.5" height="102.6" rx="1.5" fill="url(#heat2)" stroke="#333333" stroke-width="1.5"/>
<path d="M1010.5 140.8 L1010.5 240.9" fill="none" stroke="#efc9ab" stroke-width="1.2" stroke-linecap="butt" stroke-linejoin="miter"/>
<circle cx="1023.3" cy="190.9" r="5" fill="#f2883a" stroke="#3a2518" stroke-width="1.2"/>
<path d="M1020.3 190.9 L1026.3 190.9" fill="none" stroke="#fff" stroke-width="1.5" stroke-linecap="butt" stroke-linejoin="miter"/>
<path d="M1023.3 187.9 L1023.3 193.9" fill="none" stroke="#fff" stroke-width="1.5" stroke-linecap="butt" stroke-linejoin="miter"/>
<rect x="1055.4" y="138.1" width="31.8" height="105.5" rx="0" fill="#9a9a9a" stroke="none" stroke-width="1"/>
<path d="M1055.4 242.3 L1086.0 242.3 L1086.0 138.1" fill="none" stroke="#ffffff" stroke-width="2.5" stroke-linecap="butt" stroke-linejoin="miter"/>
<path d="M1056.2 243.6 L1056.2 138.8 L1087.2 138.8" fill="none" stroke="#7a7a7a" stroke-width="1.5" stroke-linecap="butt" stroke-linejoin="miter"/>
<rect x="1059.3" y="141.6" width="24.3" height="99.0" rx="0" fill="#ff0000" stroke="#2a2a2a" stroke-width="1.5"/>
<path d="M1059.4 190.9 L1083.2 190.9" fill="none" stroke="#3a0000" stroke-width="2" stroke-linecap="butt" stroke-linejoin="miter"/>
<circle cx="1071.2" cy="190.9" r="3.3" fill="#000"/>
<rect x="838.9" y="329.4" width="115.6" height="130.8" rx="0" fill="#d5d5d5" stroke="#2f3445" stroke-width="1.5"/>
<rect x="840.1" y="330.6" width="113.1" height="128.3" rx="0" fill="none" stroke="#e6e6e6" stroke-width="1"/>
<rect x="843.8" y="335.9" width="49.8" height="28.3" rx="0" fill="#ffffff" stroke="#393c4c" stroke-width="2.6"/>
<rect x="899.3" y="335.9" width="49.6" height="28.3" rx="0" fill="#ffffff" stroke="#393c4c" stroke-width="2.6"/>
<text x="848.4" y="354.2" font-size="12.2" font-weight="bold" fill="#272b45" text-anchor="start" font-family="Liberation Sans, sans-serif" textLength="42.4" lengthAdjust="spacingAndGlyphs" stroke="#272b45" stroke-width="0.45" stroke-linejoin="round">Manual</text>
<text x="905.4" y="354.2" font-size="12.5" font-weight="bold" fill="#272b45" text-anchor="start" font-family="Liberation Sans, sans-serif" textLength="37.8" lengthAdjust="spacingAndGlyphs" stroke="#272b45" stroke-width="0.45" stroke-linejoin="round">INTER</text>
<text x="849.9" y="386.2" font-size="13" font-weight="bold" fill="#272b45" text-anchor="start" font-family="Liberation Sans, sans-serif" textLength="20.8" lengthAdjust="spacingAndGlyphs" stroke="#272b45" stroke-width="0.45" stroke-linejoin="round">PV:</text>
<rect x="885.1" y="372.9" width="60.4" height="17.2" rx="3" fill="#ffffff" stroke="#393c4c" stroke-width="2"/>
<text x="915.3" y="386.2" font-size="13" font-weight="bold" fill="#272b45" text-anchor="middle" font-family="Liberation Sans, sans-serif" textLength="20.4" lengthAdjust="spacingAndGlyphs" stroke="#272b45" stroke-width="0.45" stroke-linejoin="round">0.0</text>
<text x="849.9" y="407.1" font-size="13" font-weight="bold" fill="#272b45" text-anchor="start" font-family="Liberation Sans, sans-serif" textLength="20.8" lengthAdjust="spacingAndGlyphs" stroke="#272b45" stroke-width="0.45" stroke-linejoin="round">SP:</text>
<rect x="885.1" y="394.4" width="60.4" height="17.2" rx="3" fill="#ffffff" stroke="#393c4c" stroke-width="2"/>
<text x="915.3" y="407.1" font-size="13" font-weight="bold" fill="#272b45" text-anchor="middle" font-family="Liberation Sans, sans-serif" textLength="28.9" lengthAdjust="spacingAndGlyphs" stroke="#272b45" stroke-width="0.45" stroke-linejoin="round">23.0</text>
<text x="849.9" y="428.0" font-size="13" font-weight="bold" fill="#272b45" text-anchor="start" font-family="Liberation Sans, sans-serif" textLength="29.7" lengthAdjust="spacingAndGlyphs" stroke="#272b45" stroke-width="0.45" stroke-linejoin="round">Unit:</text>
<rect x="885.1" y="415.9" width="60.4" height="17.2" rx="3" fill="#d8d8d8" stroke="#393c4c" stroke-width="2"/>
<text x="915.3" y="428.0" font-size="13" font-weight="bold" fill="#272b45" text-anchor="middle" font-family="Liberation Sans, sans-serif" textLength="13.1" lengthAdjust="spacingAndGlyphs" stroke="#272b45" stroke-width="0.45" stroke-linejoin="round">'C</text>
<text x="849.9" y="448.9" font-size="13" font-weight="bold" fill="#272b45" text-anchor="start" font-family="Liberation Sans, sans-serif" textLength="27.8" lengthAdjust="spacingAndGlyphs" stroke="#272b45" stroke-width="0.45" stroke-linejoin="round">Out:</text>
<rect x="885.1" y="437.4" width="60.4" height="17.2" rx="3" fill="#ffffff" stroke="#393c4c" stroke-width="2"/>
<text x="915.3" y="448.9" font-size="12" font-weight="bold" fill="#272b45" text-anchor="middle" font-family="Liberation Sans, sans-serif" textLength="34.8" lengthAdjust="spacingAndGlyphs" stroke="#272b45" stroke-width="0.45" stroke-linejoin="round">0.0 %</text>
<rect x="854.4" y="313.6" width="81.5" height="17.7" rx="3" fill="#8e8f92" stroke="none" stroke-width="1"/>
<text x="857.1" y="327.3" font-size="12.5" font-weight="bold" fill="#ffffff" text-anchor="start" font-family="Liberation Sans, sans-serif" textLength="68.3" lengthAdjust="spacingAndGlyphs" stroke="#ffffff" stroke-width="0.45" stroke-linejoin="round">B=HIC014</text>
<rect x="977.0" y="387.8" width="115.6" height="130.8" rx="0" fill="#d5d5d5" stroke="#2f3445" stroke-width="1.5"/>
<rect x="978.2" y="389.0" width="113.1" height="128.3" rx="0" fill="none" stroke="#e6e6e6" stroke-width="1"/>
<rect x="981.9" y="394.3" width="49.8" height="28.3" rx="0" fill="#ffffff" stroke="#393c4c" stroke-width="2.6"/>
<rect x="1037.4" y="394.3" width="49.6" height="28.3" rx="0" fill="#ffffff" stroke="#393c4c" stroke-width="2.6"/>
<text x="986.5" y="412.6" font-size="12.2" font-weight="bold" fill="#272b45" text-anchor="start" font-family="Liberation Sans, sans-serif" textLength="42.4" lengthAdjust="spacingAndGlyphs" stroke="#272b45" stroke-width="0.45" stroke-linejoin="round">Manual</text>
<text x="1043.5" y="412.6" font-size="12.5" font-weight="bold" fill="#272b45" text-anchor="start" font-family="Liberation Sans, sans-serif" textLength="37.8" lengthAdjust="spacingAndGlyphs" stroke="#272b45" stroke-width="0.45" stroke-linejoin="round">INTER</text>
<text x="988.0" y="444.6" font-size="13" font-weight="bold" fill="#272b45" text-anchor="start" font-family="Liberation Sans, sans-serif" textLength="20.8" lengthAdjust="spacingAndGlyphs" stroke="#272b45" stroke-width="0.45" stroke-linejoin="round">PV:</text>
<rect x="1023.2" y="431.3" width="60.4" height="17.2" rx="3" fill="#ffffff" stroke="#393c4c" stroke-width="2"/>
<text x="1053.4" y="444.6" font-size="13" font-weight="bold" fill="#272b45" text-anchor="middle" font-family="Liberation Sans, sans-serif" textLength="20.4" lengthAdjust="spacingAndGlyphs" stroke="#272b45" stroke-width="0.45" stroke-linejoin="round">0.0</text>
<text x="988.0" y="465.5" font-size="13" font-weight="bold" fill="#272b45" text-anchor="start" font-family="Liberation Sans, sans-serif" textLength="20.8" lengthAdjust="spacingAndGlyphs" stroke="#272b45" stroke-width="0.45" stroke-linejoin="round">SP:</text>
<rect x="1023.2" y="452.8" width="60.4" height="17.2" rx="3" fill="#ffffff" stroke="#393c4c" stroke-width="2"/>
<text x="1053.4" y="465.5" font-size="13" font-weight="bold" fill="#272b45" text-anchor="middle" font-family="Liberation Sans, sans-serif" textLength="28.9" lengthAdjust="spacingAndGlyphs" stroke="#272b45" stroke-width="0.45" stroke-linejoin="round">25.0</text>
<text x="988.0" y="486.4" font-size="13" font-weight="bold" fill="#272b45" text-anchor="start" font-family="Liberation Sans, sans-serif" textLength="29.7" lengthAdjust="spacingAndGlyphs" stroke="#272b45" stroke-width="0.45" stroke-linejoin="round">Unit:</text>
<rect x="1023.2" y="474.3" width="60.4" height="17.2" rx="3" fill="#d8d8d8" stroke="#393c4c" stroke-width="2"/>
<text x="1053.4" y="486.4" font-size="13" font-weight="bold" fill="#272b45" text-anchor="middle" font-family="Liberation Sans, sans-serif" textLength="13.1" lengthAdjust="spacingAndGlyphs" stroke="#272b45" stroke-width="0.45" stroke-linejoin="round">'C</text>
<text x="988.0" y="507.3" font-size="13" font-weight="bold" fill="#272b45" text-anchor="start" font-family="Liberation Sans, sans-serif" textLength="27.8" lengthAdjust="spacingAndGlyphs" stroke="#272b45" stroke-width="0.45" stroke-linejoin="round">Out:</text>
<rect x="1023.2" y="495.8" width="60.4" height="17.2" rx="3" fill="#ffffff" stroke="#393c4c" stroke-width="2"/>
<text x="1053.4" y="507.3" font-size="12" font-weight="bold" fill="#272b45" text-anchor="middle" font-family="Liberation Sans, sans-serif" textLength="34.8" lengthAdjust="spacingAndGlyphs" stroke="#272b45" stroke-width="0.45" stroke-linejoin="round">0.0 %</text>
<rect x="991.6" y="366.3" width="82.2" height="18.5" rx="3" fill="#8e8f92" stroke="none" stroke-width="1"/>
<text x="994.3" y="380.8" font-size="12.5" font-weight="bold" fill="#ffffff" text-anchor="start" font-family="Liberation Sans, sans-serif" textLength="68.3" lengthAdjust="spacingAndGlyphs" stroke="#ffffff" stroke-width="0.45" stroke-linejoin="round">B=HIC015</text>
<rect x="648.3" y="117.8" width="71.4" height="50.2" rx="3" fill="url(#btn)" stroke="#3c3f4c" stroke-width="2"/>
<text x="684.0" y="150.2" font-size="18" font-weight="bold" fill="#ffffff" text-anchor="middle" font-family="Liberation Sans, sans-serif" textLength="53.2" lengthAdjust="spacingAndGlyphs" stroke="#ffffff" stroke-width="0.45" stroke-linejoin="round">AGGR</text>
<rect x="271.8" y="478.4" width="97.9" height="50.3" rx="3" fill="url(#btn)" stroke="#3c3f4c" stroke-width="2"/>
<text x="320.8" y="500.4" font-size="18" font-weight="bold" fill="#ffffff" text-anchor="middle" font-family="Liberation Sans, sans-serif" textLength="52.2" lengthAdjust="spacingAndGlyphs" stroke="#ffffff" stroke-width="0.45" stroke-linejoin="round">VFD 1</text>
<text x="320.8" y="521.8" font-size="18" font-weight="bold" fill="#ffffff" text-anchor="middle" font-family="Liberation Sans, sans-serif" textLength="55.9" lengthAdjust="spacingAndGlyphs" stroke="#ffffff" stroke-width="0.45" stroke-linejoin="round">RESET</text>
<rect x="749.8" y="478.4" width="97.9" height="50.3" rx="3" fill="url(#btn)" stroke="#3c3f4c" stroke-width="2"/>
<text x="798.8" y="500.4" font-size="18" font-weight="bold" fill="#ffffff" text-anchor="middle" font-family="Liberation Sans, sans-serif" textLength="52.2" lengthAdjust="spacingAndGlyphs" stroke="#ffffff" stroke-width="0.45" stroke-linejoin="round">VFD 2</text>
<text x="798.8" y="521.8" font-size="18" font-weight="bold" fill="#ffffff" text-anchor="middle" font-family="Liberation Sans, sans-serif" textLength="55.9" lengthAdjust="spacingAndGlyphs" stroke="#ffffff" stroke-width="0.45" stroke-linejoin="round">RESET</text>
<rect x="33.0" y="414.3" width="103.7" height="40.6" rx="3" fill="url(#btn)" stroke="#3c3f4c" stroke-width="2"/>
<text x="84.8" y="443.2" font-size="22" font-weight="bold" fill="#ffffff" text-anchor="middle" font-family="Liberation Sans, sans-serif" textLength="62.8" lengthAdjust="spacingAndGlyphs" stroke="#ffffff" stroke-width="0.45" stroke-linejoin="round">Alarm</text>
<rect x="33.0" y="547.1" width="103.9" height="50.5" rx="3" fill="url(#btn)" stroke="#3c3f4c" stroke-width="2"/>
<text x="85.0" y="569.7" font-size="16.5" font-weight="bold" fill="#ffffff" text-anchor="middle" font-family="Liberation Sans, sans-serif" textLength="54.4" lengthAdjust="spacingAndGlyphs" stroke="#ffffff" stroke-width="0.45" stroke-linejoin="round">TREND</text>
<text x="85.0" y="588.2" font-size="16.5" font-weight="bold" fill="#ffffff" text-anchor="middle" font-family="Liberation Sans, sans-serif" textLength="63.4" lengthAdjust="spacingAndGlyphs" stroke="#ffffff" stroke-width="0.45" stroke-linejoin="round">VFD_HZ</text>
<rect x="33.0" y="605.7" width="103.9" height="50.5" rx="3" fill="url(#btn)" stroke="#3c3f4c" stroke-width="2"/>
<text x="85.0" y="628.3" font-size="16.5" font-weight="bold" fill="#ffffff" text-anchor="middle" font-family="Liberation Sans, sans-serif" textLength="54.4" lengthAdjust="spacingAndGlyphs" stroke="#ffffff" stroke-width="0.45" stroke-linejoin="round">TREND</text>
<text x="85.0" y="646.8" font-size="16.5" font-weight="bold" fill="#ffffff" text-anchor="middle" font-family="Liberation Sans, sans-serif" textLength="78.0" lengthAdjust="spacingAndGlyphs" stroke="#ffffff" stroke-width="0.45" stroke-linejoin="round">VFD_RUN</text>
<rect x="33.0" y="664.3" width="103.9" height="50.5" rx="3" fill="url(#btn)" stroke="#3c3f4c" stroke-width="2"/>
<text x="85.0" y="686.9" font-size="16.5" font-weight="bold" fill="#ffffff" text-anchor="middle" font-family="Liberation Sans, sans-serif" textLength="54.4" lengthAdjust="spacingAndGlyphs" stroke="#ffffff" stroke-width="0.45" stroke-linejoin="round">TREND</text>
<text x="85.0" y="705.4" font-size="16.5" font-weight="bold" fill="#ffffff" text-anchor="middle" font-family="Liberation Sans, sans-serif" textLength="62.0" lengthAdjust="spacingAndGlyphs" stroke="#ffffff" stroke-width="0.45" stroke-linejoin="round">PID_SP</text>
<rect x="33.0" y="722.9" width="103.9" height="50.5" rx="3" fill="url(#btn)" stroke="#3c3f4c" stroke-width="2"/>
<text x="85.0" y="745.5" font-size="16.5" font-weight="bold" fill="#ffffff" text-anchor="middle" font-family="Liberation Sans, sans-serif" textLength="54.4" lengthAdjust="spacingAndGlyphs" stroke="#ffffff" stroke-width="0.45" stroke-linejoin="round">TREND</text>
<text x="85.0" y="764.0" font-size="16.5" font-weight="bold" fill="#ffffff" text-anchor="middle" font-family="Liberation Sans, sans-serif" textLength="61.0" lengthAdjust="spacingAndGlyphs" stroke="#ffffff" stroke-width="0.45" stroke-linejoin="round">PID_PV</text>
<rect x="33.0" y="781.5" width="103.9" height="50.5" rx="3" fill="url(#btn)" stroke="#3c3f4c" stroke-width="2"/>
<text x="85.0" y="804.1" font-size="16.5" font-weight="bold" fill="#ffffff" text-anchor="middle" font-family="Liberation Sans, sans-serif" textLength="54.4" lengthAdjust="spacingAndGlyphs" stroke="#ffffff" stroke-width="0.45" stroke-linejoin="round">TREND</text>
<text x="85.0" y="822.6" font-size="16.5" font-weight="bold" fill="#ffffff" text-anchor="middle" font-family="Liberation Sans, sans-serif" textLength="74.0" lengthAdjust="spacingAndGlyphs" stroke="#ffffff" stroke-width="0.45" stroke-linejoin="round">PID_OUT</text>
<rect x="1120.2" y="102.4" width="13.0" height="13.4" rx="0" fill="#ff0010" stroke="#7a1010" stroke-width="1"/>
<path d="M1121.0 103.5 L1132.5 103.5" fill="none" stroke="#ff6060" stroke-width="1" stroke-linecap="butt" stroke-linejoin="miter"/>
<text x="1139.0" y="114.4" font-size="12.8" font-weight="bold" fill="#ffffff" text-anchor="start" font-family="Liberation Sans, sans-serif" textLength="158.0" lengthAdjust="spacingAndGlyphs" stroke="#ffffff" stroke-width="0.45" stroke-linejoin="round">VFD Panel Normal Power</text>
<rect x="1120.2" y="118.1" width="13.0" height="13.4" rx="0" fill="#ff0010" stroke="#7a1010" stroke-width="1"/>
<path d="M1121.0 119.2 L1132.5 119.2" fill="none" stroke="#ff6060" stroke-width="1" stroke-linecap="butt" stroke-linejoin="miter"/>
<text x="1139.0" y="130.1" font-size="12.8" font-weight="bold" fill="#ffffff" text-anchor="start" font-family="Liberation Sans, sans-serif" textLength="60.4" lengthAdjust="spacingAndGlyphs" stroke="#ffffff" stroke-width="0.45" stroke-linejoin="round">PLC Fault</text>
<rect x="1120.2" y="166.8" width="13.0" height="13.4" rx="0" fill="#ff0010" stroke="#7a1010" stroke-width="1"/>
<path d="M1121.0 167.9 L1132.5 167.9" fill="none" stroke="#ff6060" stroke-width="1" stroke-linecap="butt" stroke-linejoin="miter"/>
<text x="1139.0" y="178.8" font-size="12.8" font-weight="bold" fill="#ffffff" text-anchor="start" font-family="Liberation Sans, sans-serif" textLength="168.4" lengthAdjust="spacingAndGlyphs" stroke="#ffffff" stroke-width="0.45" stroke-linejoin="round">VFD_1 Panle general Fault</text>
<rect x="1120.2" y="182.5" width="13.0" height="13.4" rx="0" fill="#ff0010" stroke="#7a1010" stroke-width="1"/>
<path d="M1121.0 183.6 L1132.5 183.6" fill="none" stroke="#ff6060" stroke-width="1" stroke-linecap="butt" stroke-linejoin="miter"/>
<text x="1139.0" y="194.5" font-size="12.8" font-weight="bold" fill="#ffffff" text-anchor="start" font-family="Liberation Sans, sans-serif" textLength="77.1" lengthAdjust="spacingAndGlyphs" stroke="#ffffff" stroke-width="0.45" stroke-linejoin="round">VFD_1 Fault</text>
<rect x="1120.2" y="198.2" width="13.0" height="13.4" rx="0" fill="#ff0010" stroke="#7a1010" stroke-width="1"/>
<path d="M1121.0 199.3 L1132.5 199.3" fill="none" stroke="#ff6060" stroke-width="1" stroke-linecap="butt" stroke-linejoin="miter"/>
<text x="1139.0" y="210.2" font-size="12.8" font-weight="bold" fill="#ffffff" text-anchor="start" font-family="Liberation Sans, sans-serif" textLength="88.0" lengthAdjust="spacingAndGlyphs" stroke="#ffffff" stroke-width="0.45" stroke-linejoin="round">Heater1 Fault</text>
<rect x="1120.2" y="213.9" width="13.0" height="13.4" rx="0" fill="#474747" stroke="#262626" stroke-width="1"/>
<path d="M1121.0 215.0 L1132.5 215.0" fill="none" stroke="#6a6a6a" stroke-width="1" stroke-linecap="butt" stroke-linejoin="miter"/>
<text x="1139.0" y="225.9" font-size="12.8" font-weight="bold" fill="#ffffff" text-anchor="start" font-family="Liberation Sans, sans-serif" textLength="183.2" lengthAdjust="spacingAndGlyphs" stroke="#ffffff" stroke-width="0.45" stroke-linejoin="round">Running pressure Fault (NO)</text>
<rect x="1120.2" y="229.6" width="13.0" height="13.4" rx="0" fill="#474747" stroke="#262626" stroke-width="1"/>
<path d="M1121.0 230.7 L1132.5 230.7" fill="none" stroke="#6a6a6a" stroke-width="1" stroke-linecap="butt" stroke-linejoin="miter"/>
<text x="1139.0" y="241.6" font-size="12.8" font-weight="bold" fill="#ffffff" text-anchor="start" font-family="Liberation Sans, sans-serif" textLength="174.0" lengthAdjust="spacingAndGlyphs" stroke="#ffffff" stroke-width="0.45" stroke-linejoin="round">FAN01 min. Freq Fault (NO)</text>
<rect x="1120.2" y="245.3" width="13.0" height="13.4" rx="0" fill="#474747" stroke="#262626" stroke-width="1"/>
<path d="M1121.0 246.4 L1132.5 246.4" fill="none" stroke="#6a6a6a" stroke-width="1" stroke-linecap="butt" stroke-linejoin="miter"/>
<text x="1139.0" y="257.3" font-size="12.8" font-weight="bold" fill="#ffffff" text-anchor="start" font-family="Liberation Sans, sans-serif" textLength="170.7" lengthAdjust="spacingAndGlyphs" stroke="#ffffff" stroke-width="0.45" stroke-linejoin="round">Filter pressure switch (NO)</text>
<rect x="1120.2" y="261.0" width="13.0" height="13.4" rx="0" fill="#474747" stroke="#262626" stroke-width="1"/>
<path d="M1121.0 262.1 L1132.5 262.1" fill="none" stroke="#6a6a6a" stroke-width="1" stroke-linecap="butt" stroke-linejoin="miter"/>
<text x="1139.0" y="273.0" font-size="12.8" font-weight="bold" fill="#ffffff" text-anchor="start" font-family="Liberation Sans, sans-serif" textLength="163.0" lengthAdjust="spacingAndGlyphs" stroke="#ffffff" stroke-width="0.45" stroke-linejoin="round">overpressure switch (NO)</text>
<rect x="1120.2" y="320.3" width="13.0" height="13.4" rx="0" fill="#ff0010" stroke="#7a1010" stroke-width="1"/>
<path d="M1121.0 321.4 L1132.5 321.4" fill="none" stroke="#ff6060" stroke-width="1" stroke-linecap="butt" stroke-linejoin="miter"/>
<text x="1139.0" y="332.3" font-size="12.8" font-weight="bold" fill="#ffffff" text-anchor="start" font-family="Liberation Sans, sans-serif" textLength="168.4" lengthAdjust="spacingAndGlyphs" stroke="#ffffff" stroke-width="0.45" stroke-linejoin="round">VFD_2 Panle general Fault</text>
<rect x="1120.2" y="336.0" width="13.0" height="13.4" rx="0" fill="#ff0010" stroke="#7a1010" stroke-width="1"/>
<path d="M1121.0 337.1 L1132.5 337.1" fill="none" stroke="#ff6060" stroke-width="1" stroke-linecap="butt" stroke-linejoin="miter"/>
<text x="1139.0" y="348.0" font-size="12.8" font-weight="bold" fill="#ffffff" text-anchor="start" font-family="Liberation Sans, sans-serif" textLength="77.1" lengthAdjust="spacingAndGlyphs" stroke="#ffffff" stroke-width="0.45" stroke-linejoin="round">VFD_2 Fault</text>
<rect x="1120.2" y="351.7" width="13.0" height="13.4" rx="0" fill="#ff0010" stroke="#7a1010" stroke-width="1"/>
<path d="M1121.0 352.8 L1132.5 352.8" fill="none" stroke="#ff6060" stroke-width="1" stroke-linecap="butt" stroke-linejoin="miter"/>
<text x="1139.0" y="363.7" font-size="12.8" font-weight="bold" fill="#ffffff" text-anchor="start" font-family="Liberation Sans, sans-serif" textLength="88.0" lengthAdjust="spacingAndGlyphs" stroke="#ffffff" stroke-width="0.45" stroke-linejoin="round">Heater2 Fault</text>
<rect x="1120.2" y="367.4" width="13.0" height="13.4" rx="0" fill="#474747" stroke="#262626" stroke-width="1"/>
<path d="M1121.0 368.5 L1132.5 368.5" fill="none" stroke="#6a6a6a" stroke-width="1" stroke-linecap="butt" stroke-linejoin="miter"/>
<text x="1139.0" y="379.4" font-size="12.8" font-weight="bold" fill="#ffffff" text-anchor="start" font-family="Liberation Sans, sans-serif" textLength="183.2" lengthAdjust="spacingAndGlyphs" stroke="#ffffff" stroke-width="0.45" stroke-linejoin="round">Running pressure Fault (NO)</text>
<rect x="1120.2" y="383.1" width="13.0" height="13.4" rx="0" fill="#474747" stroke="#262626" stroke-width="1"/>
<path d="M1121.0 384.2 L1132.5 384.2" fill="none" stroke="#6a6a6a" stroke-width="1" stroke-linecap="butt" stroke-linejoin="miter"/>
<text x="1139.0" y="395.1" font-size="12.8" font-weight="bold" fill="#ffffff" text-anchor="start" font-family="Liberation Sans, sans-serif" textLength="174.0" lengthAdjust="spacingAndGlyphs" stroke="#ffffff" stroke-width="0.45" stroke-linejoin="round">FAN02 min. Freq Fault (NO)</text>
<rect x="1120.2" y="398.8" width="13.0" height="13.4" rx="0" fill="#474747" stroke="#262626" stroke-width="1"/>
<path d="M1121.0 399.9 L1132.5 399.9" fill="none" stroke="#6a6a6a" stroke-width="1" stroke-linecap="butt" stroke-linejoin="miter"/>
<text x="1139.0" y="410.8" font-size="12.8" font-weight="bold" fill="#ffffff" text-anchor="start" font-family="Liberation Sans, sans-serif" textLength="170.7" lengthAdjust="spacingAndGlyphs" stroke="#ffffff" stroke-width="0.45" stroke-linejoin="round">Filter pressure switch (NO)</text>
<rect x="1120.2" y="414.5" width="13.0" height="13.4" rx="0" fill="#474747" stroke="#262626" stroke-width="1"/>
<path d="M1121.0 415.6 L1132.5 415.6" fill="none" stroke="#6a6a6a" stroke-width="1" stroke-linecap="butt" stroke-linejoin="miter"/>
<text x="1139.0" y="426.5" font-size="12.8" font-weight="bold" fill="#ffffff" text-anchor="start" font-family="Liberation Sans, sans-serif" textLength="163.0" lengthAdjust="spacingAndGlyphs" stroke="#ffffff" stroke-width="0.45" stroke-linejoin="round">overpressure switch (NO)</text>
<rect x="1307.6" y="95.4" width="53.1" height="69.9" rx="0" fill="#3f4352" stroke="none" stroke-width="1"/>
<rect x="1309.8" y="97.4" width="48.8" height="50.9" rx="0" fill="#ffffff" stroke="none" stroke-width="1"/>
<path d="M1334 104.8 L1351.3 137.9 L1316.9 137.9 Z" fill="#f8f000" stroke="#000" stroke-width="3.6" stroke-linejoin="round"/>
<rect x="1332.2" y="114.8" width="3.7" height="12.6" rx="0" fill="#111" stroke="none" stroke-width="1"/>
<rect x="1332.2" y="129.6" width="3.7" height="3.6" rx="0" fill="#111" stroke="none" stroke-width="1"/>
<text x="1334.2" y="162.3" font-size="14" font-weight="bold" fill="#ffffff" text-anchor="middle" font-family="Liberation Sans, sans-serif" textLength="7.0" lengthAdjust="spacingAndGlyphs" stroke="#ffffff" stroke-width="0.45" stroke-linejoin="round">8</text>
<rect x="1226.2" y="568.8" width="86.6" height="24.7" rx="3" fill="#fff" stroke="#393c4c" stroke-width="2.4"/>
<text x="1269.5" y="588.0" font-size="16.5" font-weight="bold" fill="#272b45" text-anchor="middle" font-family="Liberation Sans, sans-serif" textLength="46.0" lengthAdjust="spacingAndGlyphs" stroke="#272b45" stroke-width="0.45" stroke-linejoin="round">0.0 'C</text>
<text x="1262.7" y="608.5" font-size="12.5" font-weight="bold" fill="#2a2e3a" text-anchor="middle" font-family="Liberation Sans, sans-serif" textLength="36.0" lengthAdjust="spacingAndGlyphs" stroke="#2a2e3a" stroke-width="0.45" stroke-linejoin="round">TT-01</text>
<rect x="1221.0" y="616.6" width="103.4" height="33.6" rx="3" fill="url(#btn)" stroke="#3c3f4c" stroke-width="2"/>
<text x="1272.7" y="639.5" font-size="16.5" font-weight="bold" fill="#ffffff" text-anchor="middle" font-family="Liberation Sans, sans-serif" textLength="54.4" lengthAdjust="spacingAndGlyphs" stroke="#ffffff" stroke-width="0.45" stroke-linejoin="round">TREND</text>
<rect x="1136.7" y="691.2" width="86.8" height="23.8" rx="3" fill="#fff" stroke="#393c4c" stroke-width="2.4"/>
<text x="1180.0" y="709.5" font-size="16.5" font-weight="bold" fill="#272b45" text-anchor="middle" font-family="Liberation Sans, sans-serif" textLength="48.0" lengthAdjust="spacingAndGlyphs" stroke="#272b45" stroke-width="0.45" stroke-linejoin="round">0.0 pa</text>
<text x="1179.0" y="731.0" font-size="12.5" font-weight="bold" fill="#2a2e3a" text-anchor="middle" font-family="Liberation Sans, sans-serif" textLength="43.0" lengthAdjust="spacingAndGlyphs" stroke="#2a2e3a" stroke-width="0.45" stroke-linejoin="round">PDT-01</text>
<rect x="1131.2" y="738.9" width="102.6" height="33.4" rx="3" fill="url(#btn)" stroke="#3c3f4c" stroke-width="2"/>
<text x="1182.5" y="761.5" font-size="16.5" font-weight="bold" fill="#ffffff" text-anchor="middle" font-family="Liberation Sans, sans-serif" textLength="54.4" lengthAdjust="spacingAndGlyphs" stroke="#ffffff" stroke-width="0.45" stroke-linejoin="round">TREND</text>
<rect x="320.7" y="654.6" width="795.3" height="180.4" rx="0" fill="#33cccc" stroke="#00ff00" stroke-width="6"/>
<path d="M519.0 654.6 L519.0 835.0" fill="none" stroke="#00ff00" stroke-width="6" stroke-linecap="butt" stroke-linejoin="miter"/>
<path d="M718.5 654.6 L718.5 835.0" fill="none" stroke="#00ff00" stroke-width="6" stroke-linecap="butt" stroke-linejoin="miter"/>
<path d="M917.0 654.6 L917.0 835.0" fill="none" stroke="#00ff00" stroke-width="6" stroke-linecap="butt" stroke-linejoin="miter"/>
<text x="326.9" y="677.3" font-size="17" font-weight="bold" fill="#272b45" text-anchor="start" font-family="Liberation Sans, sans-serif" textLength="118.0" lengthAdjust="spacingAndGlyphs" stroke="#272b45" stroke-width="0.45" stroke-linejoin="round">R10 R STAGE</text>
<text x="528.8" y="677.3" font-size="17" font-weight="bold" fill="#272b45" text-anchor="start" font-family="Liberation Sans, sans-serif" textLength="75.0" lengthAdjust="spacingAndGlyphs" stroke="#272b45" stroke-width="0.45" stroke-linejoin="round">G10 R CP</text>
<text x="725.0" y="677.3" font-size="17" font-weight="bold" fill="#272b45" text-anchor="start" font-family="Liberation Sans, sans-serif" textLength="116.0" lengthAdjust="spacingAndGlyphs" stroke="#272b45" stroke-width="0.45" stroke-linejoin="round">B10 L STAGE</text>
<text x="926.4" y="677.3" font-size="17" font-weight="bold" fill="#272b45" text-anchor="start" font-family="Liberation Sans, sans-serif" textLength="80.0" lengthAdjust="spacingAndGlyphs" stroke="#272b45" stroke-width="0.45" stroke-linejoin="round">R10 L CP</text>
<rect x="378.2" y="701.7" width="86.8" height="23.7" rx="3" fill="#fff" stroke="#393c4c" stroke-width="2.4"/>
<text x="422.6" y="720.0" font-size="16.5" font-weight="bold" fill="#272b45" text-anchor="middle" font-family="Liberation Sans, sans-serif" textLength="46.0" lengthAdjust="spacingAndGlyphs" stroke="#272b45" stroke-width="0.45" stroke-linejoin="round">0.0 'C</text>
<text x="415.5" y="740.9" font-size="12.5" font-weight="bold" fill="#1f3535" text-anchor="middle" font-family="Liberation Sans, sans-serif" textLength="36.0" lengthAdjust="spacingAndGlyphs" stroke="#1f3535" stroke-width="0.45" stroke-linejoin="round">TT-02</text>
<rect x="378.2" y="760.0" width="86.8" height="23.7" rx="3" fill="#fff" stroke="#393c4c" stroke-width="2.4"/>
<text x="422.6" y="778.3" font-size="16.5" font-weight="bold" fill="#272b45" text-anchor="middle" font-family="Liberation Sans, sans-serif" textLength="46.0" lengthAdjust="spacingAndGlyphs" stroke="#272b45" stroke-width="0.45" stroke-linejoin="round">0.0 'C</text>
<text x="415.5" y="799.2" font-size="12.5" font-weight="bold" fill="#1f3535" text-anchor="middle" font-family="Liberation Sans, sans-serif" textLength="36.0" lengthAdjust="spacingAndGlyphs" stroke="#1f3535" stroke-width="0.45" stroke-linejoin="round">TT-03</text>
<rect x="574.4" y="701.7" width="86.8" height="23.7" rx="3" fill="#fff" stroke="#393c4c" stroke-width="2.4"/>
<text x="618.8" y="720.0" font-size="16.5" font-weight="bold" fill="#272b45" text-anchor="middle" font-family="Liberation Sans, sans-serif" textLength="46.0" lengthAdjust="spacingAndGlyphs" stroke="#272b45" stroke-width="0.45" stroke-linejoin="round">0.0 'C</text>
<text x="611.7" y="740.9" font-size="12.5" font-weight="bold" fill="#1f3535" text-anchor="middle" font-family="Liberation Sans, sans-serif" textLength="36.0" lengthAdjust="spacingAndGlyphs" stroke="#1f3535" stroke-width="0.45" stroke-linejoin="round">TT-04</text>
<rect x="574.4" y="760.0" width="86.8" height="23.7" rx="3" fill="#fff" stroke="#393c4c" stroke-width="2.4"/>
<text x="618.8" y="778.3" font-size="16.5" font-weight="bold" fill="#272b45" text-anchor="middle" font-family="Liberation Sans, sans-serif" textLength="46.0" lengthAdjust="spacingAndGlyphs" stroke="#272b45" stroke-width="0.45" stroke-linejoin="round">0.0 'C</text>
<text x="611.7" y="799.2" font-size="12.5" font-weight="bold" fill="#1f3535" text-anchor="middle" font-family="Liberation Sans, sans-serif" textLength="36.0" lengthAdjust="spacingAndGlyphs" stroke="#1f3535" stroke-width="0.45" stroke-linejoin="round">TT-05</text>
<rect x="781.6" y="701.7" width="86.8" height="23.7" rx="3" fill="#fff" stroke="#393c4c" stroke-width="2.4"/>
<text x="826.0" y="720.0" font-size="16.5" font-weight="bold" fill="#272b45" text-anchor="middle" font-family="Liberation Sans, sans-serif" textLength="46.0" lengthAdjust="spacingAndGlyphs" stroke="#272b45" stroke-width="0.45" stroke-linejoin="round">0.0 'C</text>
<text x="818.9" y="740.9" font-size="12.5" font-weight="bold" fill="#1f3535" text-anchor="middle" font-family="Liberation Sans, sans-serif" textLength="36.0" lengthAdjust="spacingAndGlyphs" stroke="#1f3535" stroke-width="0.45" stroke-linejoin="round">TT-06</text>
<rect x="781.6" y="760.0" width="86.8" height="23.7" rx="3" fill="#fff" stroke="#393c4c" stroke-width="2.4"/>
<text x="826.0" y="778.3" font-size="16.5" font-weight="bold" fill="#272b45" text-anchor="middle" font-family="Liberation Sans, sans-serif" textLength="46.0" lengthAdjust="spacingAndGlyphs" stroke="#272b45" stroke-width="0.45" stroke-linejoin="round">0.0 'C</text>
<text x="818.9" y="799.2" font-size="12.5" font-weight="bold" fill="#1f3535" text-anchor="middle" font-family="Liberation Sans, sans-serif" textLength="36.0" lengthAdjust="spacingAndGlyphs" stroke="#1f3535" stroke-width="0.45" stroke-linejoin="round">TT-07</text>
<rect x="972.6" y="701.7" width="86.8" height="23.7" rx="3" fill="#fff" stroke="#393c4c" stroke-width="2.4"/>
<text x="1017.0" y="720.0" font-size="16.5" font-weight="bold" fill="#272b45" text-anchor="middle" font-family="Liberation Sans, sans-serif" textLength="46.0" lengthAdjust="spacingAndGlyphs" stroke="#272b45" stroke-width="0.45" stroke-linejoin="round">0.0 'C</text>
<text x="1009.9" y="740.9" font-size="12.5" font-weight="bold" fill="#1f3535" text-anchor="middle" font-family="Liberation Sans, sans-serif" textLength="36.0" lengthAdjust="spacingAndGlyphs" stroke="#1f3535" stroke-width="0.45" stroke-linejoin="round">TT-08</text>
<rect x="972.6" y="760.0" width="86.8" height="23.7" rx="3" fill="#fff" stroke="#393c4c" stroke-width="2.4"/>
<text x="1017.0" y="778.3" font-size="16.5" font-weight="bold" fill="#272b45" text-anchor="middle" font-family="Liberation Sans, sans-serif" textLength="46.0" lengthAdjust="spacingAndGlyphs" stroke="#272b45" stroke-width="0.45" stroke-linejoin="round">0.0 'C</text>
<text x="1009.9" y="799.2" font-size="12.5" font-weight="bold" fill="#1f3535" text-anchor="middle" font-family="Liberation Sans, sans-serif" textLength="36.0" lengthAdjust="spacingAndGlyphs" stroke="#1f3535" stroke-width="0.45" stroke-linejoin="round">TT-09</text>
<path d="M323.0 715.8 L377.0 715.8" fill="none" stroke="#ffffff" stroke-width="2.3" stroke-linecap="butt" stroke-linejoin="miter" stroke-dasharray="5.6 3.1"/>
<path d="M466.2 715.8 L573.2 715.8" fill="none" stroke="#ffffff" stroke-width="2.3" stroke-linecap="butt" stroke-linejoin="miter" stroke-dasharray="5.6 3.1"/>
<path d="M662.4 715.8 L780.4 715.8" fill="none" stroke="#ffffff" stroke-width="2.3" stroke-linecap="butt" stroke-linejoin="miter" stroke-dasharray="5.6 3.1"/>
<path d="M869.6 715.8 L971.4 715.8" fill="none" stroke="#ffffff" stroke-width="2.3" stroke-linecap="butt" stroke-linejoin="miter" stroke-dasharray="5.6 3.1"/>
<path d="M323.0 774.1 L377.0 774.1" fill="none" stroke="#ffffff" stroke-width="2.3" stroke-linecap="butt" stroke-linejoin="miter" stroke-dasharray="5.6 3.1"/>
<path d="M466.2 774.1 L573.2 774.1" fill="none" stroke="#ffffff" stroke-width="2.3" stroke-linecap="butt" stroke-linejoin="miter" stroke-dasharray="5.6 3.1"/>
<path d="M662.4 774.1 L780.4 774.1" fill="none" stroke="#ffffff" stroke-width="2.3" stroke-linecap="butt" stroke-linejoin="miter" stroke-dasharray="5.6 3.1"/>
<path d="M869.6 774.1 L971.4 774.1" fill="none" stroke="#ffffff" stroke-width="2.3" stroke-linecap="butt" stroke-linejoin="miter" stroke-dasharray="5.6 3.1"/>
<rect x="468.2" y="791.7" width="102.5" height="33.8" rx="3" fill="url(#btn)" stroke="#3c3f4c" stroke-width="2"/>
<text x="519.5" y="815.0" font-size="16.5" font-weight="bold" fill="#ffffff" text-anchor="middle" font-family="Liberation Sans, sans-serif" textLength="54.3" lengthAdjust="spacingAndGlyphs" stroke="#ffffff" stroke-width="0.45" stroke-linejoin="round">TREND</text>
<rect x="865.9" y="791.6" width="102.5" height="33.7" rx="3" fill="url(#btn)" stroke="#3c3f4c" stroke-width="2"/>
<text x="917.1" y="815.0" font-size="16.5" font-weight="bold" fill="#ffffff" text-anchor="middle" font-family="Liberation Sans, sans-serif" textLength="54.3" lengthAdjust="spacingAndGlyphs" stroke="#ffffff" stroke-width="0.45" stroke-linejoin="round">TREND</text>
<rect x="210.8" y="692.9" width="39.3" height="39.8" rx="2" fill="#a9a9a9" stroke="#2a2a2a" stroke-width="1.5"/>
<rect x="212.3" y="694.4" width="36.2" height="36.7" rx="1" fill="none" stroke="#c4c4c4" stroke-width="0.8"/>
<text x="230.2" y="727.9" font-size="45.5" font-weight="normal" fill="#000" text-anchor="middle" font-family="Liberation Serif, sans-serif" textLength="35.5" lengthAdjust="spacingAndGlyphs">Σ</text>
</svg></body></html>
